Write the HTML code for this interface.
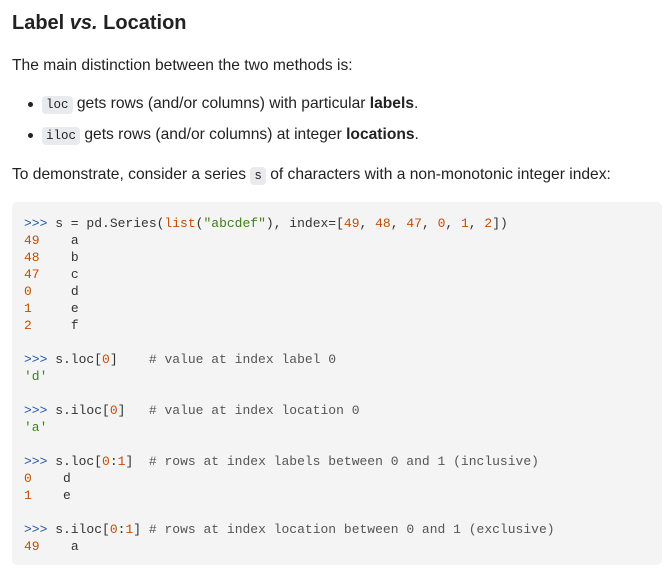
<!DOCTYPE html>
<html><head><meta charset="utf-8"><style>
body{margin:0;background:#fff;font-family:"Liberation Sans",sans-serif;color:#222;width:672px;height:569px;overflow:hidden;position:relative}
.a{position:absolute;white-space:nowrap}
h1{position:absolute;left:12px;top:12px;margin:0;font-size:20px;font-weight:bold;color:#222}
p{margin:0;font-size:15.6px}
code{font-family:"Liberation Mono",monospace;font-size:12.5px;background:#e8eaed;border-radius:4px;padding:2px 4px}
.dot{position:absolute;width:5px;height:5px;border-radius:50%;background:#222}
pre{position:absolute;left:12px;top:202px;width:650px;height:363px;margin:0;background:#f4f4f4;border-radius:5px;box-sizing:border-box;padding:13px 0 0 12px;font-family:"Liberation Mono",monospace;font-size:13px;line-height:17px;color:#333}
.p{color:#2757a8}.n{color:#c44d06}.s{color:#3e7f17}.c{color:#555}
</style></head><body>
<h1>Label <i>vs.</i> Location</h1>
<p class="a" style="left:12px;top:57px">The main distinction between the two methods is:</p>
<div class="dot" style="left:28px;top:102px"></div>
<p class="a" style="left:42px;top:95px"><code>loc</code> gets rows (and/or columns) with particular <b>labels</b>.</p>
<div class="dot" style="left:28px;top:133px"></div>
<p class="a" style="left:42px;top:126px"><code>iloc</code> gets rows (and/or columns) at integer <b>locations</b>.</p>
<p class="a" style="left:12px;top:166px">To demonstrate, consider a series <code>s</code> of characters with a non-monotonic integer index:</p>
<pre><span class="p">&gt;&gt;&gt;</span> s = pd.Series(<span class="n">list</span>(<span class="s">"abcdef"</span>), index=[<span class="n">49</span>, <span class="n">48</span>, <span class="n">47</span>, <span class="n">0</span>, <span class="n">1</span>, <span class="n">2</span>])
<span class="n">49</span>    a
<span class="n">48</span>    b
<span class="n">47</span>    c
<span class="n">0</span>     d
<span class="n">1</span>     e
<span class="n">2</span>     f

<span class="p">&gt;&gt;&gt;</span> s.loc[<span class="n">0</span>]    <span class="c"># value at index label 0</span>
<span class="s">'d'</span>

<span class="p">&gt;&gt;&gt;</span> s.iloc[<span class="n">0</span>]   <span class="c"># value at index location 0</span>
<span class="s">'a'</span>

<span class="p">&gt;&gt;&gt;</span> s.loc[<span class="n">0</span>:<span class="n">1</span>]  <span class="c"># rows at index labels between 0 and 1 (inclusive)</span>
<span class="n">0</span>    d
<span class="n">1</span>    e

<span class="p">&gt;&gt;&gt;</span> s.iloc[<span class="n">0</span>:<span class="n">1</span>] <span class="c"># rows at index location between 0 and 1 (exclusive)</span>
<span class="n">49</span>    a</pre>
</body></html>
